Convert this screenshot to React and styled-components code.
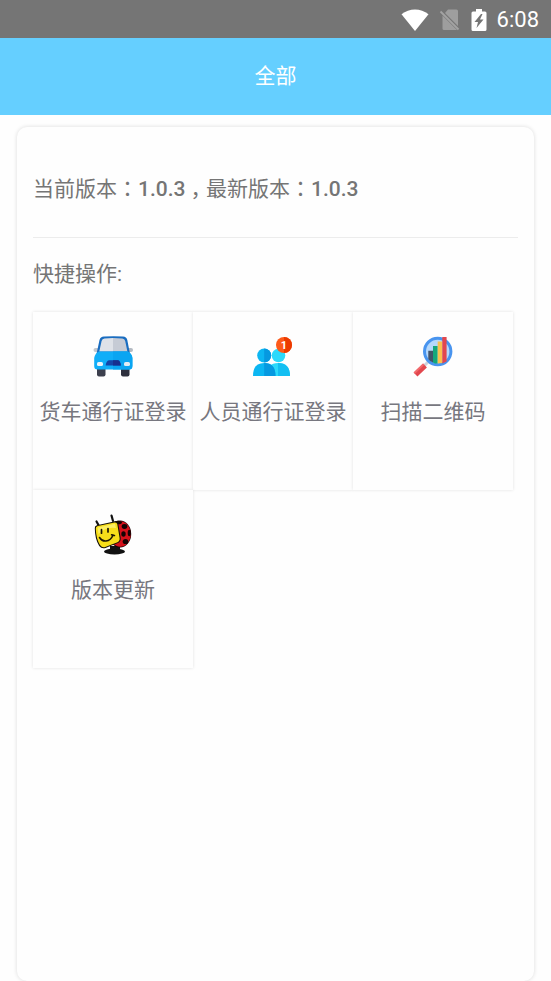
import styled, { createGlobalStyle } from 'styled-components';

function App() {
  return (
    <>
      <GlobalStyle />
      <Page>
        <StatusBar>
          <WifiIcon />
          <NoSimIcon />
          <BatteryIcon />
          <Clock>6:08</Clock>
        </StatusBar>
        <Header>
          <HeaderTitle>全部</HeaderTitle>
        </Header>
        <Card>
          <Version>
            当前版本<Colon>{'\uff1a'}</Colon>
            <Num>1.0.3</Num>
            <Comma>{'\uff0c'}</Comma>最新版本<Colon>{'\uff1a'}</Colon>
            <Num>1.0.3</Num>
          </Version>
          <SectionTitle>快捷操作:</SectionTitle>
          <TileGrid>
            {ACTIONS.map(({ name, Icon }) => (
              <Tile key={name} type="button">
                <Icon />
                <TileName>{name}</TileName>
              </Tile>
            ))}
          </TileGrid>
        </Card>
      </Page>
    </>
  );
}

const WifiIcon = () => (
  <svg width="28" height="22" viewBox="0 0 28 22" aria-hidden="true">
    <path d="M14 22 L0.5 5.2 Q6.5 0.5 14 0.5 T27.5 5.2 Z" fill="#fff" />
  </svg>
);

const NoSimIcon = () => (
  <svg width="22" height="22" viewBox="0 0 20 22" aria-hidden="true">
    <path
      d="M8 0.5 H16.5 Q18 0.5 18 2 V17 L5 4 Z M2.5 6.5 L17 21 H4 Q2.5 21 2.5 19.5 Z"
      fill="#9e9e9e"
    />
    <path d="M0.5 2.5 L18.5 20.5" stroke="#a3a3a3" strokeWidth="1.8" />
  </svg>
);

const BatteryIcon = () => (
  <svg width="16" height="22" viewBox="0 0 16 22" aria-hidden="true">
    <path
      d="M5 0 H11 V2.5 H14 Q15.5 2.5 15.5 4 V20.5 Q15.5 22 14 22 H2 Q0.5 22 0.5 20.5 V4 Q0.5 2.5 2 2.5 H5 Z"
      fill="#fff"
    />
    <path d="M10 5 L3.5 13 H7 L5.5 19 L12.5 10.5 H9 L11.5 5 Z" fill="#757575" />
  </svg>
);

const CarIcon = () => (
  <TileIcon viewBox="0 0 40 40" aria-hidden="true">
    <rect x="4" y="31" width="8.5" height="9.5" rx="2" fill="#3c3f4d" />
    <rect x="28" y="31" width="8.5" height="9.5" rx="2" fill="#2e303d" />
    <rect x="0.5" y="12" width="7" height="4" rx="2" fill="#c3c8cf" />
    <rect x="33" y="12" width="7" height="4" rx="2" fill="#b4bac2" />
    <path
      d="M3.5 18 L6.5 4 Q7.3 0.8 11 0.6 Q20 0 30 0.6 Q33.5 0.8 34.3 4 L37 18 Z"
      fill="#1a6dc0"
    />
    <path d="M6.3 15.5 L8.6 5 Q9.2 2.8 11.5 2.6 Q16 2 20 2 V15.5 Z" fill="#dfe2e8" />
    <path d="M34.4 15.5 L32.2 5 Q31.6 2.8 29.3 2.6 Q24 2 20 2 V15.5 Z" fill="#c6cbd5" />
    <path
      d="M1.2 22 Q2 17 6 15.5 H34.5 Q38.8 17 39.4 22 V30 Q39.4 33.5 36 33.5 H4.5 Q1.2 33.5 1.2 30 Z"
      fill="#10aef8"
    />
    <path d="M20 15.5 H34.5 Q38.8 17 39.4 22 V30 Q39.4 33.5 36 33.5 H20 Z" fill="#0aa5f2" />
    <rect x="4" y="26" width="6" height="4" rx="1.6" fill="#eef6fb" />
    <rect x="31" y="26" width="6" height="4" rx="1.6" fill="#e2ecf4" />
    <path d="M16 24.3 H25 Q27.5 25 27.8 29.5 H12.7 Q13 25 16 24.3 Z" fill="#1446a8" />
    <path d="M20 24.3 H25 Q27.5 25 27.8 29.5 H20 Z" fill="#17308f" />
  </TileIcon>
);

const PeopleIcon = () => (
  <TileIcon viewBox="0 0 40 40" aria-hidden="true">
    <circle cx="25.5" cy="19.5" r="6.8" fill="#2bd9fb" />
    <path d="M14 40 Q14 27 25 27 Q37 27 37 40 Z" fill="#2bd9fb" />
    <path d="M25 27 Q37 27 37 40 H25 Z" fill="#13bff2" />
    <circle cx="11.2" cy="19.5" r="7" fill="#0cb6f2" />
    <path d="M11.2 12.5 a7 7 0 0 1 0 14 Z" fill="#0699e0" />
    <path d="M0 40 Q0 27 11.2 27 Q22.5 27 22.5 40 Z" fill="#0cb6f2" />
    <path d="M11.2 27 Q22.5 27 22.5 40 H11.2 Z" fill="#0699e0" />
    <circle cx="31" cy="9" r="8" fill="#fd5a1a" />
    <path d="M31 1 a8 8 0 0 1 0 16 Z" fill="#ec3a00" />
    <BadgeText x="31" y="13">
      1
    </BadgeText>
  </TileIcon>
);

const ScanIcon = () => (
  <TileIcon viewBox="0 0 40 40" aria-hidden="true">
    <path d="M10 31 L15 26" stroke="#cfd3da" strokeWidth="3" />
    <path d="M2.5 38.5 L12 29.5" stroke="#e2474e" strokeWidth="5.5" />
    <path d="M1.3 37.1 L10.7 28.1" stroke="#f26a6c" strokeWidth="2" />
    <circle cx="24.7" cy="15.5" r="13.2" fill="#b5d8fb" stroke="#4894ef" strokeWidth="3" />
    <path d="M15.3 14.7 H20 V26.5 Q17 25.5 15.3 23 Z" fill="#42536a" />
    <path d="M20 10 H24.7 V27.5 H22 L20 26.5 Z" fill="#14a77b" />
    <path d="M24.7 5.5 H29.3 V27 L24.7 27.5 Z" fill="#fbc14e" />
    <path d="M29.3 1 H33.6 V25.5 L29.3 27.5 Z" fill="#e2474e" />
  </TileIcon>
);

const LadybugIcon = () => (
  <TileIcon viewBox="0 -1 40 40" aria-hidden="true">
    <ellipse cx="21.5" cy="36.5" rx="10.5" ry="3" fill="#111" />
    <path d="M17 31 H27 V36 H17 Z" fill="#111" />
    <ellipse cx="27" cy="19" rx="11.2" ry="13.5" fill="#140404" />
    <ellipse cx="27.3" cy="19" rx="10.4" ry="12.7" fill="#d5121b" />
    <ellipse cx="25" cy="7.5" rx="4" ry="1.8" fill="#140404" />
    <ellipse cx="31.5" cy="11.5" rx="2.8" ry="2.4" fill="#140404" />
    <ellipse cx="36.3" cy="18" rx="1.6" ry="3.2" fill="#140404" />
    <ellipse cx="30.5" cy="19" rx="2.2" ry="2.8" fill="#140404" />
    <ellipse cx="32.5" cy="26.5" rx="2.8" ry="2.6" fill="#140404" />
    <path
      d="M3.5 6.5 L6 11 M18.5 0.5 L20 6"
      stroke="#111"
      strokeWidth="2.2"
      strokeLinecap="round"
    />
    <path
      d="M1.8 13 Q1.6 10.8 4 10.2 L21 6.5 Q24.5 5.8 25.3 8.8 L27.7 23 Q28 26.6 25 28 L12.5 33 Q8.5 34 6.2 31 Q1.8 24 1.8 13 Z"
      fill="#141008"
    />
    <path
      d="M2.8 13.5 Q2.6 11.5 4.8 11 L21.5 7.5 Q23.8 7.2 24.3 9.2 L26.6 23 Q27 26 24.5 27.2 L12.2 32 Q9 32.8 7 30 Q3 23.5 2.8 13.5 Z"
      fill="#f7de1a"
    />
    <path d="M4.5 12.5 L22 8.8 L23 13 Q13 11.5 5.5 19 Z" fill="#fbee62" />
    <path
      d="M8.5 14.7 V18.2 M15 13.5 V17"
      stroke="#1c1604"
      strokeWidth="1.7"
      strokeLinecap="round"
    />
    <path
      d="M6.5 22.5 Q9 26.5 13 26 Q18 25.5 20 20 M18.5 19.8 L21.5 20.5"
      fill="none"
      stroke="#1c1604"
      strokeWidth="1.5"
      strokeLinecap="round"
    />
  </TileIcon>
);

const GlobalStyle = createGlobalStyle`
  * {
    box-sizing: border-box;
  }

  body {
    margin: 0;
    background-color: #fefefe;
    font-family: Roboto, 'Noto Sans CJK SC', sans-serif;
    font-size: 21px;
    line-height: 32px;
    color: #757575;
  }
`;

const Page = styled.div`
  display: flex;
  flex-direction: column;
  min-height: 100vh;
`;

const StatusBar = styled.div`
  display: flex;
  align-items: center;
  justify-content: flex-end;
  gap: 10px;
  height: 38px;
  padding: 2px 12px 0;
  background-color: #757575;
`;

const Clock = styled.span`
  font-size: 22px;
  color: #fff;
`;

const Header = styled.header`
  display: flex;
  align-items: center;
  justify-content: center;
  height: 77px;
  padding-bottom: 2px;
  background-color: #65cfff;
`;

const HeaderTitle = styled.h1`
  margin: 0;
  font-size: 21px;
  font-weight: 400;
  color: #fff;
`;

const Card = styled.main`
  flex: 1;
  margin: 12px 17px 0;
  padding: 0 16px;
  border-radius: 10px;
  background-color: #fefefe;
  box-shadow: 0 0 4px rgba(0, 0, 0, 0.14);
`;

const Version = styled.p`
  margin: 0;
  padding: 44px 0 32px;
  border-bottom: 1px solid #ececec;
`;

const Colon = styled.span`
  font-family: 'Noto Sans CJK TC', sans-serif;
`;

/* half-width glyph, centred in a full-width cell */
const Comma = styled.span`
  padding: 0 5px;
  font-feature-settings: 'halt';
`;

const Num = styled.span`
  font-weight: 500;
`;

const SectionTitle = styled.h2`
  margin: 0;
  padding: 20px 0 22px;
  font-size: 21px;
  font-weight: 400;
`;

const TileGrid = styled.div`
  display: grid;
  grid-template-columns: repeat(3, 33%);
  grid-auto-rows: 178px;
`;

const Tile = styled.button`
  display: flex;
  flex-direction: column;
  align-items: center;
  padding: 24px 0 0;
  border: 0;
  background-color: #fefefe;
  box-shadow: 0 0 3px rgba(0, 0, 0, 0.12);
  font: inherit;
  color: #77777f;
`;

const TileIcon = styled.svg`
  width: 40px;
  height: 40px;
  overflow: visible;
`;

const TileName = styled.span`
  margin-top: 20px;
  white-space: nowrap;
`;

const BadgeText = styled.text`
  font-size: 11px;
  font-weight: 700;
  text-anchor: middle;
  fill: #fff;
`;

const ACTIONS = [
  { name: '货车通行证登录', Icon: CarIcon },
  { name: '人员通行证登录', Icon: PeopleIcon },
  { name: '扫描二维码', Icon: ScanIcon },
  { name: '版本更新', Icon: LadybugIcon },
];

export default App;
